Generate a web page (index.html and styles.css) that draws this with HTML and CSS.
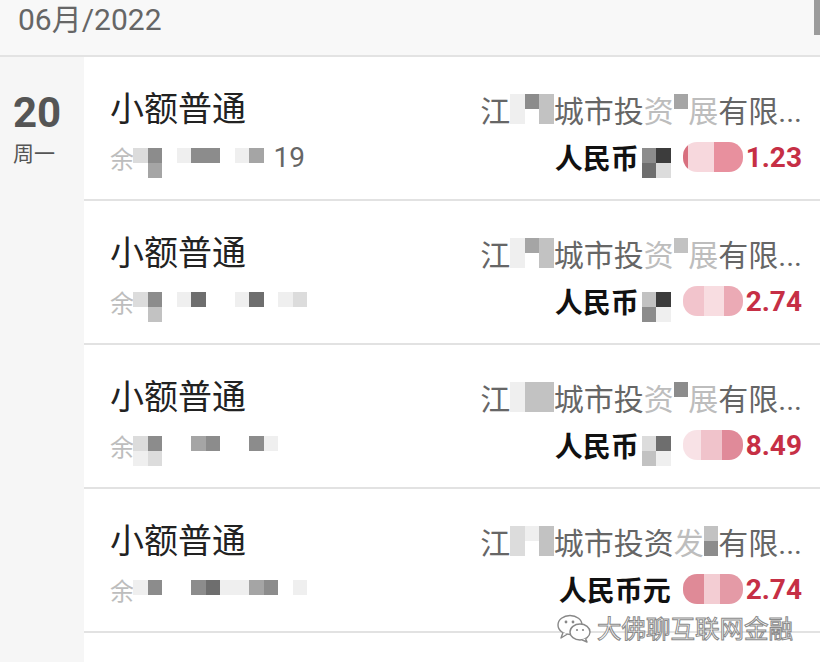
FILE: index.html
```html
<!DOCTYPE html>
<html lang="zh-CN">
<head>
  <meta charset="UTF-8">
  <title>交易明细</title>
  <link rel="stylesheet" href="styles.css">
</head>
<body>
  <div class="scroll-thumb"></div>
  <header class="month">06月/2022</header>

  <div class="day-group">
    <aside class="day">
      <div class="day-num">20</div>
      <div class="day-week">周一</div>
    </aside>

    <ul class="tx-list">
      <!-- row 1 -->
      <li class="tx">
        <div class="tx-left">
          <div class="tx-title">小额普通</div>
          <div class="tx-acct">
            <span class="ghost">余</span>
            <span class="mosaic"><i class="c2"></i><i></i><i class="c5"></i><i class="c4"></i><i></i><i></i><i class="c1"></i><i></i><i class="c5"></i><i></i><i class="c5"></i><i></i><i></i><i></i><i class="c1"></i><i></i><i class="c4"></i><i></i></span>
            <span class="acct-tail">19</span>
          </div>
        </div>
        <div class="tx-right">
          <div class="tx-payee">
            <span>江</span>
            <span class="mosaic"><i class="c1"></i><i class="c1"></i><i class="c5"></i><i></i><i class="c3"></i><i class="c3"></i></span>
            <span>城市投</span><span class="ghost">资</span>
            <span class="mosaic"><i class="c4"></i><i></i></span>
            <span class="ghost">展</span><span>有限...</span>
          </div>
          <div class="tx-amount">
            <span>人民币</span>
            <span class="mosaic"><i class="c5"></i><i class="c6"></i><i class="c7"></i><i class="c2"></i></span>
            <span class="blur b1"></span>
            <span class="num">1.23</span>
          </div>
        </div>
      </li>

      <!-- row 2 -->
      <li class="tx">
        <div class="tx-left">
          <div class="tx-title">小额普通</div>
          <div class="tx-acct">
            <span class="ghost">余</span>
            <span class="mosaic"><i class="c2"></i><i></i><i class="c5"></i><i class="c3"></i><i></i><i></i><i class="c1"></i><i></i><i class="c6"></i><i></i><i></i><i></i><i></i><i></i><i class="c1"></i><i></i><i class="c6"></i><i></i><i></i><i></i><i class="c1"></i><i></i><i class="c2"></i><i></i></span>
          </div>
        </div>
        <div class="tx-right">
          <div class="tx-payee">
            <span>江</span>
            <span class="mosaic"><i class="c1"></i><i class="c1"></i><i class="c4"></i><i></i><i class="c3"></i><i class="c3"></i></span>
            <span>城市投</span><span class="ghost">资</span>
            <span class="mosaic"><i class="c3"></i><i></i></span>
            <span class="ghost">展</span><span>有限...</span>
          </div>
          <div class="tx-amount">
            <span>人民币</span>
            <span class="mosaic"><i class="c3"></i><i class="c5"></i><i class="c7"></i><i class="c1"></i></span>
            <span class="blur b2"></span>
            <span class="num">2.74</span>
          </div>
        </div>
      </li>

      <!-- row 3 -->
      <li class="tx">
        <div class="tx-left">
          <div class="tx-title">小额普通</div>
          <div class="tx-acct">
            <span class="ghost">余</span>
            <span class="mosaic"><i class="c2"></i><i class="c1"></i><i class="c5"></i><i class="c2"></i><i></i><i></i><i></i><i></i><i class="c4"></i><i></i><i class="c5"></i><i></i><i></i><i></i><i></i><i></i><i class="c5"></i><i></i><i class="c1"></i><i></i></span>
          </div>
        </div>
        <div class="tx-right">
          <div class="tx-payee">
            <span>江</span>
            <span class="mosaic"><i class="c1"></i><i class="c1"></i><i class="c3"></i><i class="c3"></i><i class="c3"></i><i class="c3"></i></span>
            <span>城市投</span><span class="ghost">资</span>
            <span class="mosaic"><i class="c5"></i><i></i></span>
            <span class="ghost">展</span><span>有限...</span>
          </div>
          <div class="tx-amount">
            <span>人民币</span>
            <span class="mosaic"><i class="c2"></i><i class="c3"></i><i class="c6"></i><i class="c1"></i></span>
            <span class="blur b3"></span>
            <span class="num">8.49</span>
          </div>
        </div>
      </li>

      <!-- row 4 -->
      <li class="tx">
        <div class="tx-left">
          <div class="tx-title">小额普通</div>
          <div class="tx-acct">
            <span class="ghost">余</span>
            <span class="mosaic"><i class="c1"></i><i></i><i class="c5"></i><i></i><i></i><i></i><i></i><i></i><i class="c5"></i><i></i><i class="c6"></i><i></i><i class="c1"></i><i></i><i class="c1"></i><i></i><i class="c4"></i><i></i><i class="c5"></i><i></i><i></i><i></i><i class="c1"></i><i></i></span>
          </div>
        </div>
        <div class="tx-right">
          <div class="tx-payee">
            <span>江</span>
            <span class="mosaic"><i class="c2"></i><i class="c2"></i><i class="c1"></i><i></i><i class="c3"></i><i class="c3"></i></span>
            <span>城市投资</span><span class="ghost">发</span>
            <span class="mosaic"><i class="c3"></i><i class="c5"></i></span>
            <span>有限...</span>
          </div>
          <div class="tx-amount">
            <span>人民币元</span>
            <span class="blur b4"></span>
            <span class="num">2.74</span>
          </div>
        </div>
      </li>

      <!-- next row starts below the fold -->
      <li class="tx"></li>
    </ul>
  </div>

  <div class="watermark">
    <svg class="wx" width="36" height="30" viewBox="0 0 36 30">
      <ellipse cx="14" cy="12" rx="12" ry="9.5" fill="#fff" stroke="#888" stroke-width="1.4"/>
      <path d="M7 19.5 L5 25 L11.5 21" fill="#fff" stroke="#888" stroke-width="1.4" stroke-linejoin="round"/>
      <ellipse cx="24" cy="19" rx="10" ry="8" fill="#fff" stroke="#888" stroke-width="1.4"/>
      <path d="M29.5 25.5 L31 29 L26 26.8" fill="#fff" stroke="#888" stroke-width="1.4" stroke-linejoin="round"/>
      <circle cx="10" cy="9" r="1.4" fill="#888"/>
      <circle cx="17" cy="9" r="1.4" fill="#888"/>
      <circle cx="21" cy="17" r="1.1" fill="#888"/>
      <circle cx="27" cy="17" r="1.1" fill="#888"/>
    </svg>
    <span>大佛聊互联网金融</span>
  </div>
</body>
</html>
```

FILE: styles.css
```css
/* Base */
* { box-sizing: border-box; }
body {
  margin: 0;
  height: 662px;
  overflow: hidden;
  position: relative;
  background: #f6f6f6;
  font-family: Roboto, "Noto Sans CJK SC", sans-serif;
}

/* Month header */
.month {
  height: 57px;
  padding: 0 18px;
  line-height: 40px;
  font-size: 30px;
  color: #666;
  background: #f8f8f8;
  border-bottom: 2px solid #e3e3e3;
}
.scroll-thumb {
  position: absolute;
  top: 0;
  right: 0;
  width: 6px;
  height: 35px;
  background: #9c9c9c;
}

/* Day column + list */
.day-group {
  display: flex;
}
.day {
  width: 84px;
  flex-shrink: 0;
  padding: 32px 0 0 13px;
  color: #555;
}
.day-num {
  font-size: 42px;
  font-weight: bold;
  line-height: 48px;
}
.day-week {
  font-size: 21px;
  line-height: 30px;
  margin-top: 2px;
}

.tx-list {
  flex: 1;
  margin: 0;
  padding: 0;
  list-style: none;
  background: #fff;
}
.tx {
  height: 144px;
  display: flex;
  justify-content: space-between;
  padding: 30px 18px 0 26px;
  border-bottom: 2px solid #e2e2e2;
}

/* Left side */
.tx-title {
  font-size: 34px;
  line-height: 44px;
  color: #222;
}
.tx-acct {
  margin-top: 4px;
  height: 44px;
  display: flex;
  align-items: center;
  font-size: 28px;
  color: #666;
}
.tx-acct .ghost {
  width: 23px;
  overflow: hidden;
  font-size: 24px;
}
.acct-tail { margin-left: 10px; }

/* Right side */
.tx-right {
  display: flex;
  flex-direction: column;
  align-items: flex-end;
}
.tx-payee {
  height: 44px;
  display: flex;
  align-items: center;
  font-size: 30px;
  color: #666;
}
.tx-payee .mosaic:first-of-type { margin-right: 2px; }
.tx-amount {
  margin-top: 4px;
  height: 44px;
  display: flex;
  align-items: center;
  font-size: 28px;
  font-weight: bold;
  color: #111;
}
.tx-amount .num { color: #c62f45; }

.ghost { color: #bdbdbd; }

/* Masked bits of the screenshot */
.mosaic {
  display: grid;
  grid-template-rows: 15px 15px;
  grid-auto-flow: column;
  grid-auto-columns: 14.5px;
  transform: translateY(6px);
}
.tx-payee .mosaic { transform: none; }
.tx-amount .mosaic { margin-left: 3px; }
.mosaic i { display: block; }
.c1 { background: #efefef; }
.c2 { background: #dcdcdc; }
.c3 { background: #c2c2c2; }
.c4 { background: #a5a5a5; }
.c5 { background: #8c8c8c; }
.c6 { background: #6e6e6e; }
.c7 { background: #3c3c3c; }

.blur {
  display: inline-block;
  width: 60px;
  height: 30px;
  margin: 0 3px 0 12px;
  border-radius: 14px;
  filter: blur(0.7px);
}
.b1 { background: linear-gradient(90deg, #d8707f 0 9%, #f7d8dd 9% 52%, #e8909e 52%); }
.b2 { background: linear-gradient(90deg, #f2c4cc 0 35%, #f8dde1 35% 68%, #ebaab5 68%); }
.b3 { background: linear-gradient(90deg, #f8e2e6 0 30%, #f0c3cb 30% 65%, #e08a99 65%); }
.b4 { background: linear-gradient(90deg, #df8a97 0 35%, #f3cdd3 35% 62%, #e49aa6 62%); }

/* Watermark */
.watermark {
  position: absolute;
  left: 556px;
  top: 610px;
  display: flex;
  align-items: center;
  gap: 5px;
  font-family: "Noto Sans CJK SC", sans-serif;
  font-size: 24.5px;
  color: #fff;
  -webkit-text-stroke: 1px #8a8a8a;
}
```
